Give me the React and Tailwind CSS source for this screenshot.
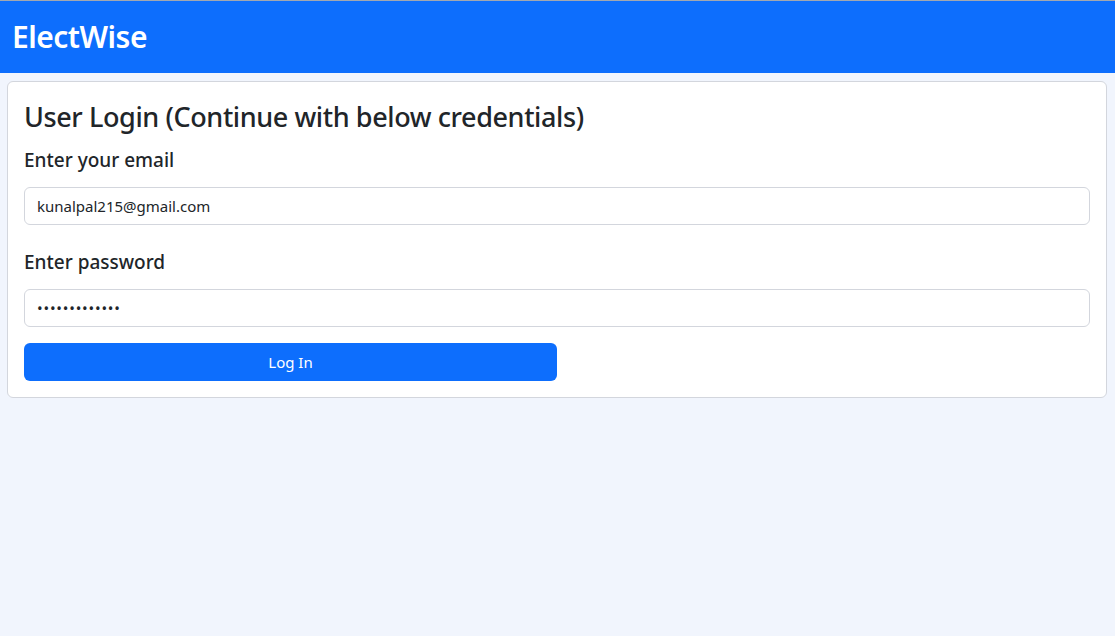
const App = () => {
  return (
    <div className="min-h-[636px] bg-[#f1f5fd] font-['Noto_Sans',sans-serif] text-[#212529]">
      {/* Navbar */}
      <header className="h-[73px] border-t border-[#a3a8b0] bg-[#0d6efd] flex items-center px-3">
        <h1 className="text-[30px] font-semibold text-white leading-none tracking-[-0.5px]">ElectWise</h1>
      </header>

      <main className="pl-[7px] pr-[8px] pt-2">
        <section className="bg-white border border-[#d3d6dd] rounded-md p-4">
          <h2 className="pt-[2px] text-[27px] leading-[34px] font-medium tracking-[-0.4px]">User Login (Continue with below credentials)</h2>

          <form className="mt-[14px]" onSubmit={(e) => e.preventDefault()}>
            <label className="block text-[19px] leading-6 font-medium">Enter your email</label>
            <input
              type="email"
              defaultValue="kunalpal215@gmail.com"
              className="mt-[15px] block w-full h-[38px] px-3 text-[15px] border border-[#d3d6dd] rounded-md outline-none"
            />

            <label className="block mt-[25px] text-[19px] leading-6 font-medium">Enter password</label>
            <input
              type="password"
              defaultValue="kunalpal21544"
              className="mt-[15px] block w-full h-[38px] px-3 text-[15px] tracking-[0.8px] border border-[#d3d6dd] rounded-md outline-none"
            />

            <button
              type="submit"
              className="mt-4 w-[533px] h-[38px] rounded-md bg-[#0d6efd] text-white text-[15px]"
            >
              Log In
            </button>
          </form>
        </section>
      </main>
    </div>
  );
};

export default App;
